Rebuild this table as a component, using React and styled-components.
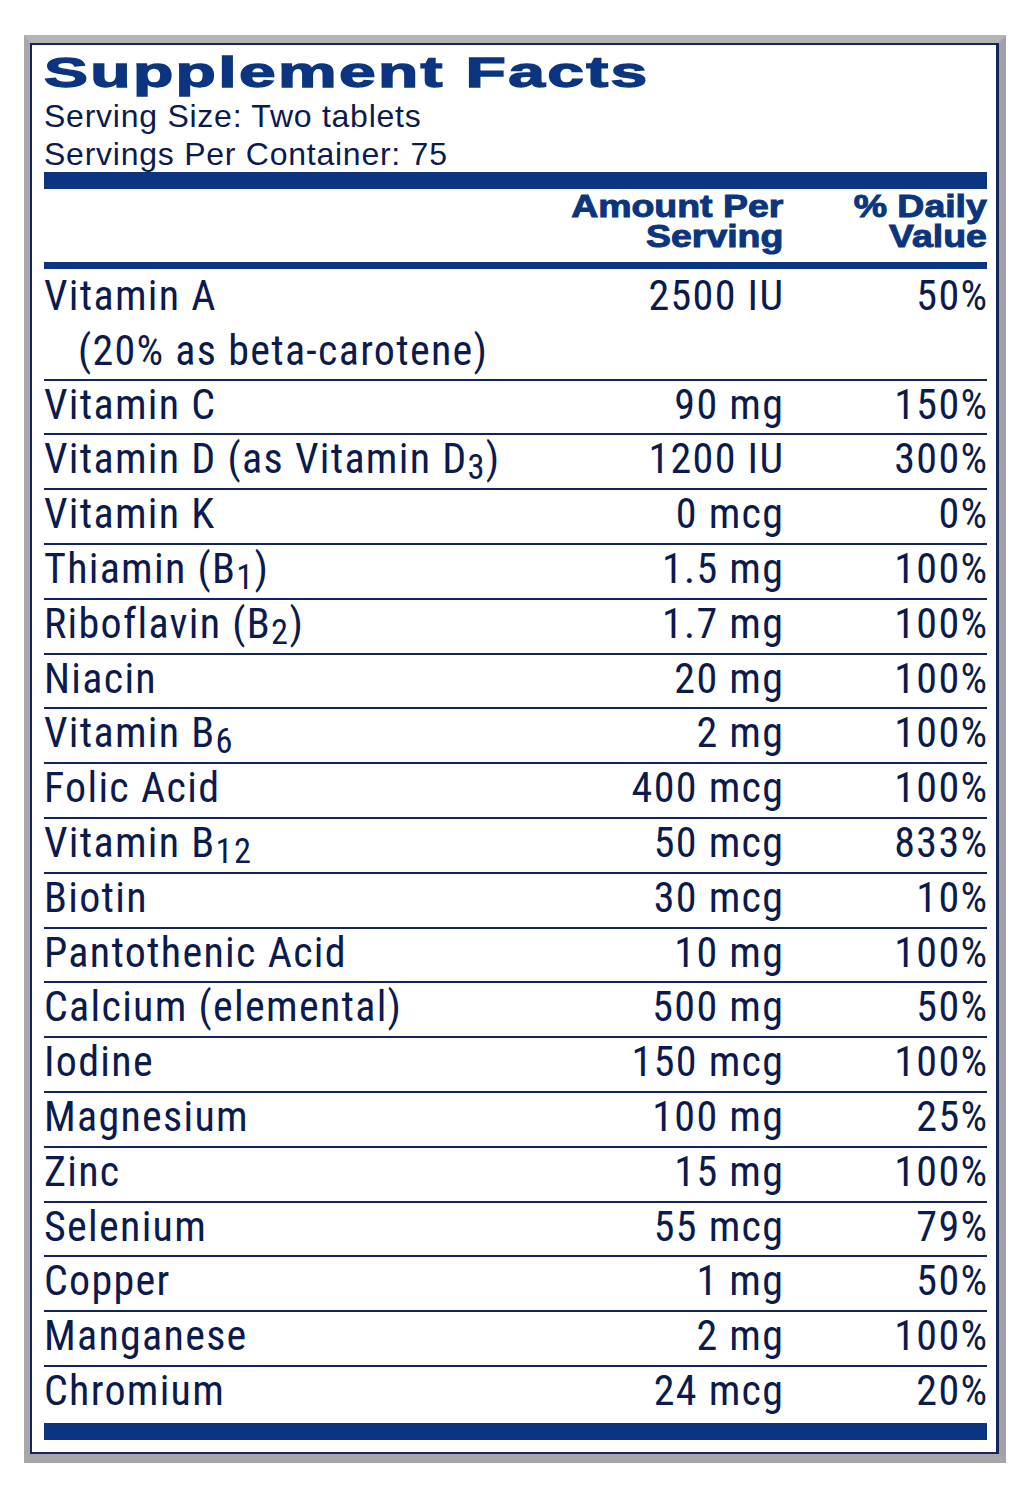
import styled, { createGlobalStyle } from 'styled-components';

const NAVY = '#0b3580';
const INK = '#0c1a4e';
const RULE = '#14255c';

const GlobalStyle = createGlobalStyle`
  body {
    margin: 0;
    background: #ffffff;
  }
`;

const Page = styled.div`
  padding: 35px 0 0 24px;
`;

const Frame = styled.div`
  width: 969px;
  border-style: solid;
  border-color: #b4b4b8 #a2a2a6 #a6a6aa #a8a8ac;
  border-width: 8px 7px 9px 6px;
`;

const Panel = styled.div`
  border-style: solid;
  border-color: ${RULE};
  border-width: 2px 3px 2px 2px;
  padding: 7px 9px 12px 12px;
  background: #ffffff;
`;

const Title = styled.h1`
  width: max-content;
  margin: 0;
  font-family: 'Liberation Sans', Arial, sans-serif;
  font-weight: 700;
  font-size: 42px;
  line-height: 42px;
  letter-spacing: 1.5px;
  color: ${NAVY};
  -webkit-text-stroke: 1.3px ${NAVY};
  white-space: nowrap;
  transform: scaleX(1.57);
  transform-origin: left center;
`;

const ServingInfo = styled.div`
  margin-top: 3px;
  font-family: 'Liberation Sans', Arial, sans-serif;
  font-size: 32px;
  line-height: 38px;
  letter-spacing: 0.75px;
  color: ${INK};
`;

const Bar = styled.div`
  height: ${(p) => p.$h}px;
  margin-top: ${(p) => p.$mt || 0}px;
  background: ${NAVY};
`;

const Grid = styled.div`
  display: grid;
  grid-template-columns: minmax(0, 1fr) 260px 204px;
`;

const HeadRow = styled(Grid)`
  padding: 2px 0 11px;
`;

const HeadCell = styled.div`
  justify-self: end;
  width: max-content;
  font-family: 'Liberation Sans', Arial, sans-serif;
  font-weight: 700;
  font-size: 32px;
  line-height: 30px;
  color: ${NAVY};
  -webkit-text-stroke: 1px ${NAVY};
  text-align: right;
  white-space: nowrap;
  transform: scaleX(1.17);
  transform-origin: right center;
`;

const Row = styled(Grid)`
  font-family: 'Roboto Condensed', 'Liberation Sans', sans-serif;
  font-stretch: condensed;
  font-size: 42px;
  line-height: ${(p) => (p.$first ? '54.8px' : '47.8px')};
  padding-bottom: ${(p) => (p.$first ? 0 : 5)}px;
  letter-spacing: 1.3px;
  color: ${INK};
  border-bottom: ${(p) => (p.$last ? 'none' : `2px solid ${RULE}`)};
`;

const Name = styled.div`
  white-space: nowrap;
`;

const SubLine = styled.div`
  padding-left: 34px;
`;

const Amount = styled.div`
  margin-right: -1.3px;
  text-align: right;
  white-space: nowrap;
`;

const Sub = styled.span`
  font-size: 0.82em;
  line-height: 0;
  vertical-align: -6px;
`;

const nutrients = [
  { name: 'Vitamin C', amount: '90 mg', dv: '150%' },
  { name: <>Vitamin D (as Vitamin D<Sub>3</Sub>)</>, amount: '1200 IU', dv: '300%' },
  { name: 'Vitamin K', amount: '0 mcg', dv: '0%' },
  { name: <>Thiamin (B<Sub>1</Sub>)</>, amount: '1.5 mg', dv: '100%' },
  { name: <>Riboflavin (B<Sub>2</Sub>)</>, amount: '1.7 mg', dv: '100%' },
  { name: 'Niacin', amount: '20 mg', dv: '100%' },
  { name: <>Vitamin B<Sub>6</Sub></>, amount: '2 mg', dv: '100%' },
  { name: 'Folic Acid', amount: '400 mcg', dv: '100%' },
  { name: <>Vitamin B<Sub>12</Sub></>, amount: '50 mcg', dv: '833%' },
  { name: 'Biotin', amount: '30 mcg', dv: '10%' },
  { name: 'Pantothenic Acid', amount: '10 mg', dv: '100%' },
  { name: 'Calcium (elemental)', amount: '500 mg', dv: '50%' },
  { name: 'Iodine', amount: '150 mcg', dv: '100%' },
  { name: 'Magnesium', amount: '100 mg', dv: '25%' },
  { name: 'Zinc', amount: '15 mg', dv: '100%' },
  { name: 'Selenium', amount: '55 mcg', dv: '79%' },
  { name: 'Copper', amount: '1 mg', dv: '50%' },
  { name: 'Manganese', amount: '2 mg', dv: '100%' },
  { name: 'Chromium', amount: '24 mcg', dv: '20%' },
];

export default function App() {
  return (
    <>
      <GlobalStyle />
      <Page>
        <Frame>
          <Panel>
            <Title>Supplement Facts</Title>
            <ServingInfo>
              <div>Serving Size: Two tablets</div>
              <div>Servings Per Container: 75</div>
            </ServingInfo>
            <Bar $h={17} $mt={-1} />
            <HeadRow>
              <div />
              <HeadCell>
                Amount Per
                <br />
                Serving
              </HeadCell>
              <HeadCell>
                % Daily
                <br />
                Value
              </HeadCell>
            </HeadRow>
            <Bar $h={7} />

            <Row $first>
              <Name>
                Vitamin A
                <SubLine>(20% as beta-carotene)</SubLine>
              </Name>
              <Amount>2500 IU</Amount>
              <Amount>50%</Amount>
            </Row>
            {nutrients.map((n, i) => (
              <Row key={i} $last={i === nutrients.length - 1}>
                <Name>{n.name}</Name>
                <Amount>{n.amount}</Amount>
                <Amount>{n.dv}</Amount>
              </Row>
            ))}

            <Bar $h={17} $mt={3} />
          </Panel>
        </Frame>
      </Page>
    </>
  );
}
